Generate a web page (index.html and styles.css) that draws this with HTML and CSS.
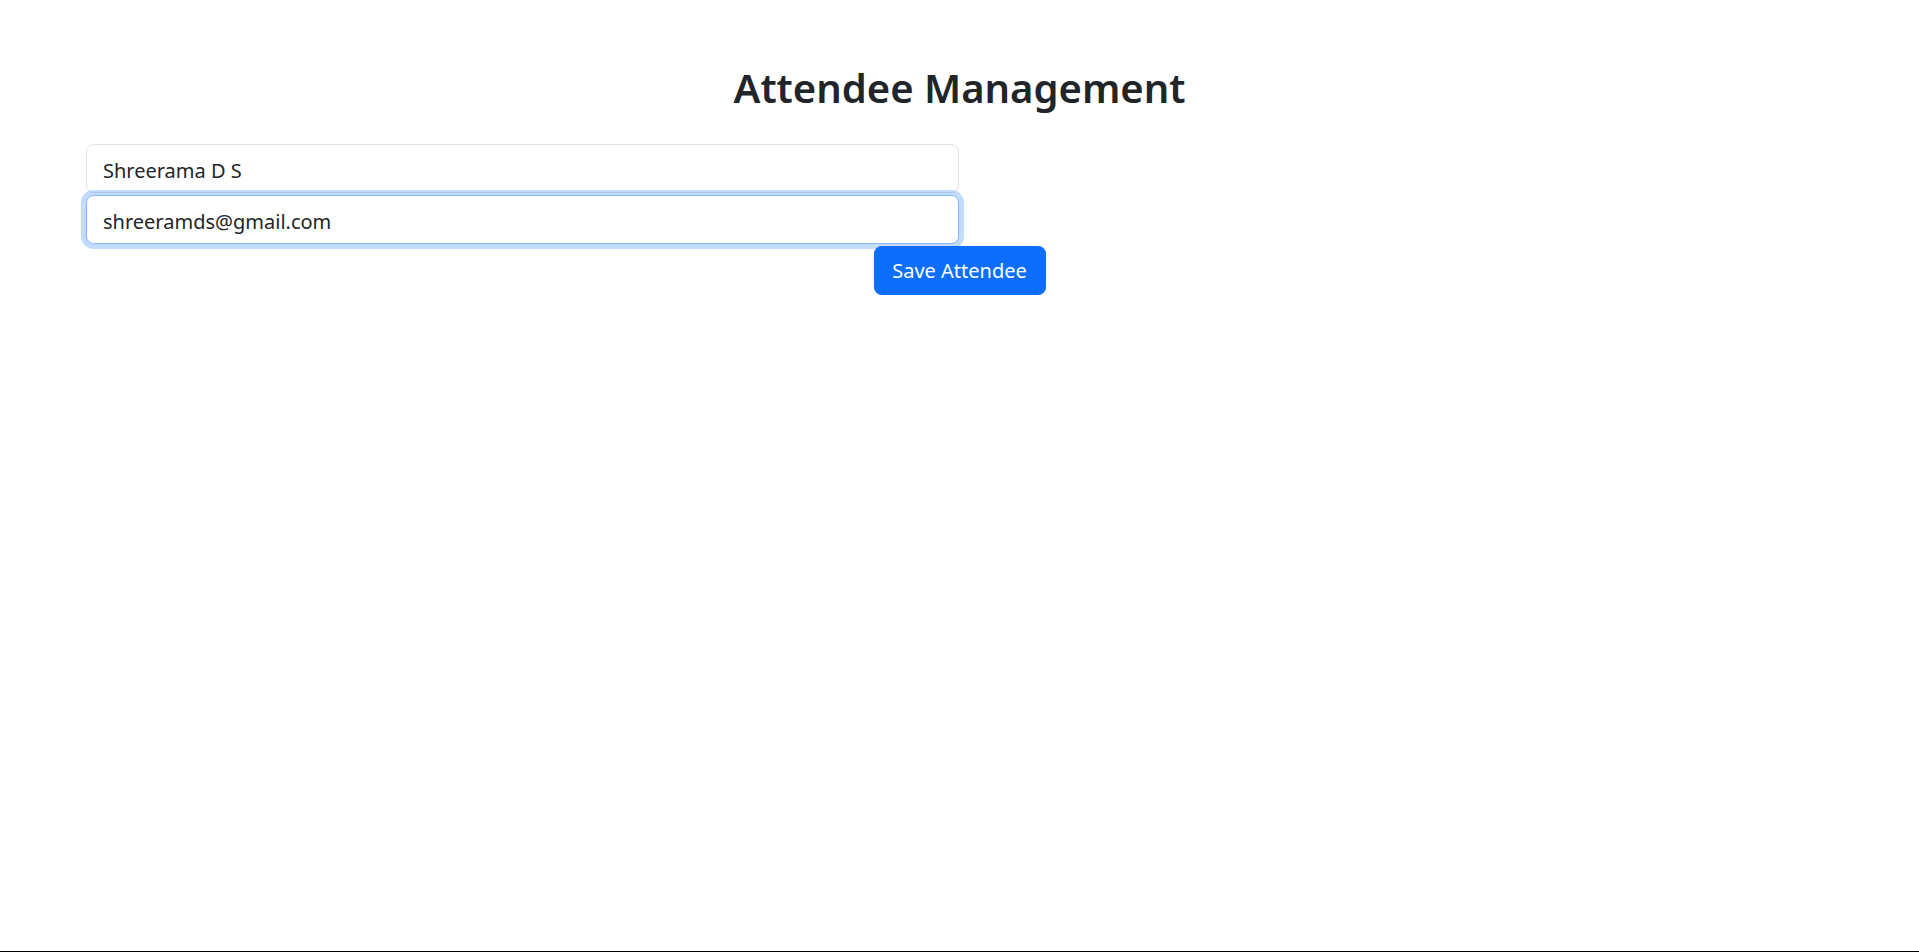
FILE: index.html
```html
<!DOCTYPE html>
<html lang="en">
<head>
<meta charset="utf-8">
<title>Attendee Management</title>
<link rel="stylesheet" href="styles.css">
</head>
<body>
<div class="page">
  <h1 class="title">Attendee Management</h1>
  <form class="attendee-form">
    <input class="field" type="text" value="Shreerama D S">
    <input class="field field-focus" type="email" value="shreeramds@gmail.com">
    <div class="actions">
      <button class="btn-save" type="button">Save Attendee</button>
    </div>
  </form>
</div>
</body>
</html>
```

FILE: styles.css
```css
html, body {
  margin: 0;
  padding: 0;
  background: #fff;
}
body {
  font-family: "Noto Sans", "Open Sans", "Liberation Sans", sans-serif;
  color: #212529;
  height: 952px;
  box-sizing: border-box;
  border-bottom: 1px solid #000;
  overflow: hidden;
}
.page {
  padding-top: 64px;
}
.title {
  margin: 0 0 32px;
  text-align: center;
  font-size: 40px;
  font-weight: 600;
  line-height: 1.2;
  color: #212529;
}
.attendee-form {
  padding: 0 86px;
  display: flex;
  flex-direction: column;
}
.field {
  display: block;
  box-sizing: border-box;
  width: 873px;
  height: 49px;
  padding: 9px 15px 5px 16px;
  font-family: inherit;
  font-size: 20px;
  color: #212529;
  background: #fff;
  border: 1px solid #dee2e6;
  border-radius: 7.5px;
  outline: none;
}
.field + .field {
  margin-top: 2px;
}
.field-focus {
  border-color: #86b7fe;
  box-shadow: 0 0 0 5px rgba(13, 110, 253, 0.25);
}
.actions {
  display: flex;
  justify-content: center;
  margin-top: 2px;
}
.btn-save {
  box-sizing: border-box;
  height: 49px;
  width: 172px;
  padding: 7px 15px;
  font-family: inherit;
  font-size: 20px;
  color: #fff;
  background: #0d6efd;
  border: 1px solid #0d6efd;
  border-radius: 7.5px;
  cursor: pointer;
}
```
